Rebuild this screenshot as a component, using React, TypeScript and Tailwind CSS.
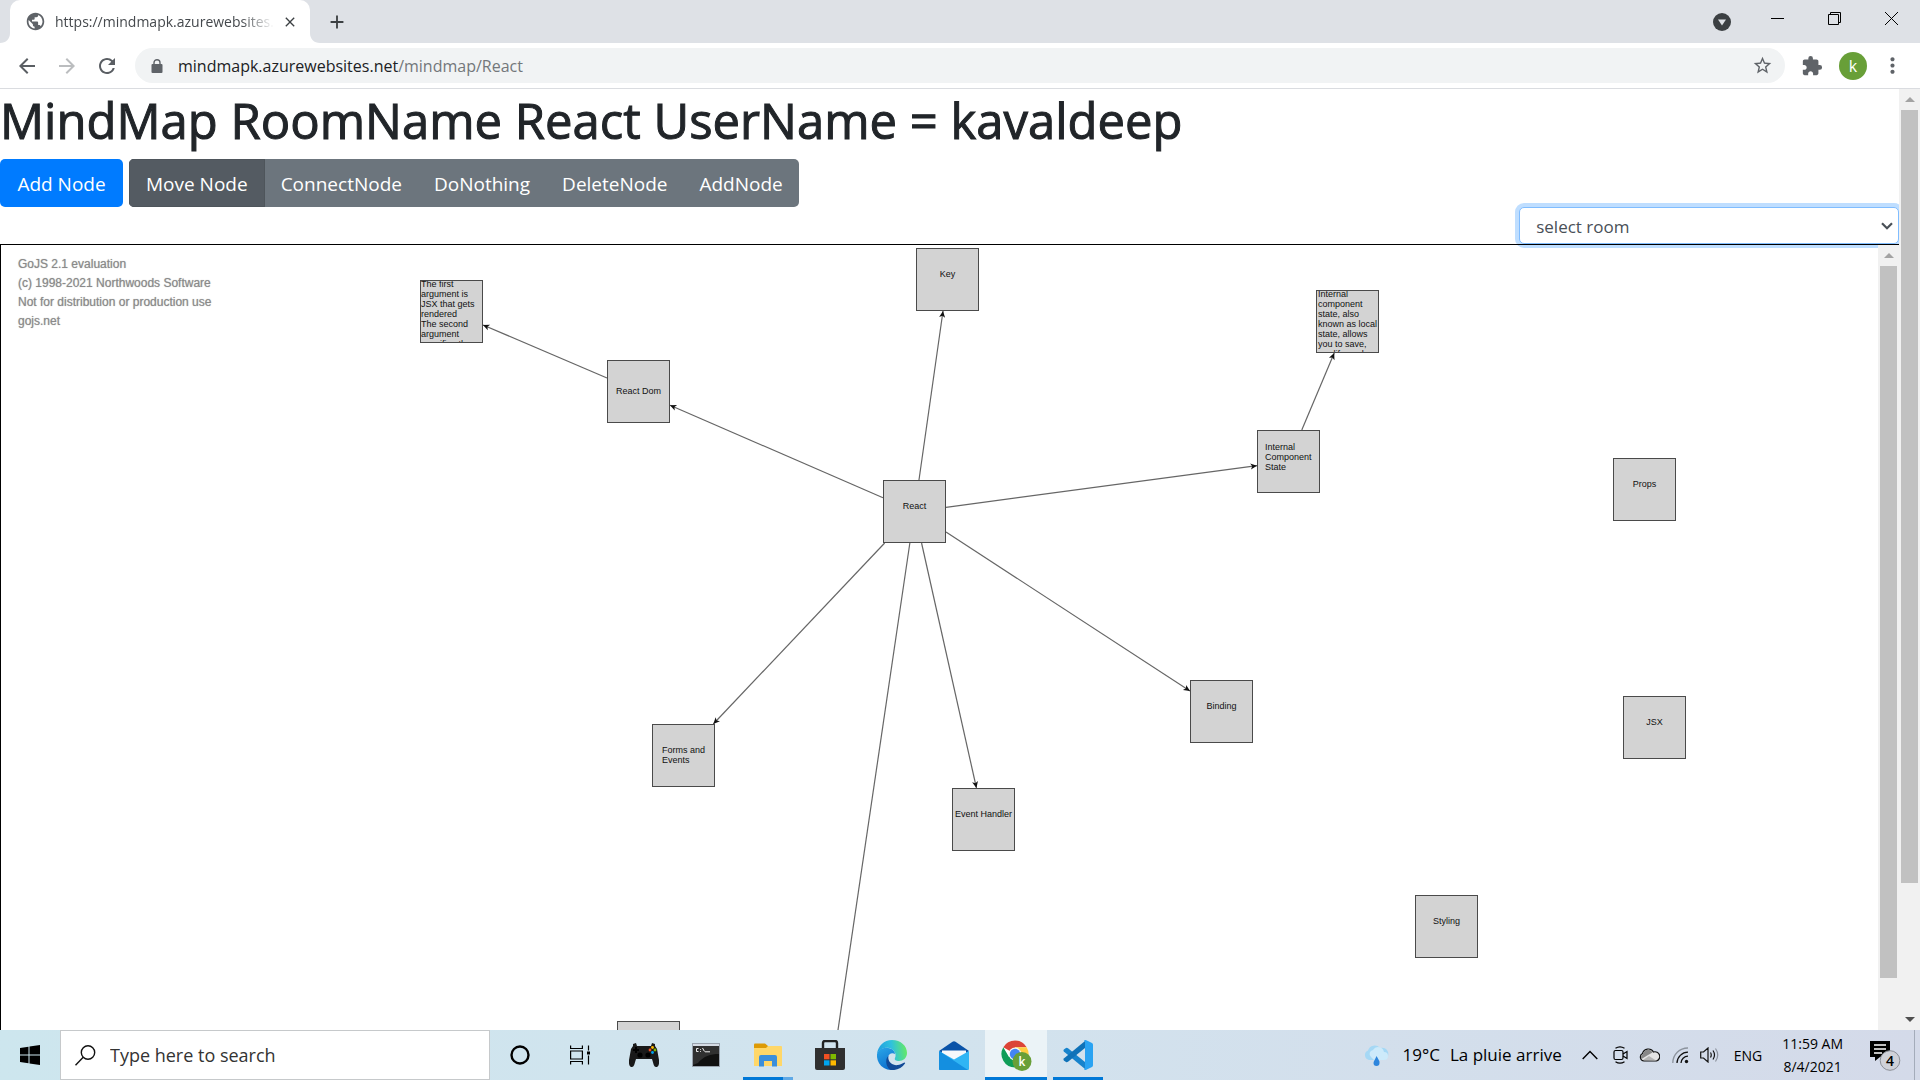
import React from "react";
import {
  MdArrowBack,
  MdArrowForward,
  MdClose,
  MdExtension,
  MdMoreVert,
  MdAdd,
  MdPublic,
  MdRefresh,
  MdStarBorder,
} from "react-icons/md";

const NODE = 63;

type MapNode = {
  id: string;
  x: number;
  y: number;
  lines: string[];
  pad: string;
};

const nodes: MapNode[] = [
  { id: "dom-note", x: 419, y: 35, pad: "-mt-0.5", lines: ["The first", "argument is", "JSX that gets", "rendered", "The second", "argument", "specifies the"] },
  { id: "dom", x: 606, y: 115, pad: "pt-[25px] text-center", lines: ["React Dom"] },
  { id: "key", x: 915, y: 3, pad: "pt-5 text-center", lines: ["Key"] },
  { id: "react", x: 882, y: 235, pad: "pt-5 text-center", lines: ["React"] },
  { id: "state-note", x: 1315, y: 45, pad: "-mt-0.5 pl-px", lines: ["Internal", "component", "state, also", "known as local", "state, allows", "you to save,", "modify, and"] },
  { id: "state", x: 1256, y: 185, pad: "pt-[11px] pl-[7px]", lines: ["Internal", "Component", "State"] },
  { id: "props", x: 1612, y: 213, pad: "pt-5 text-center", lines: ["Props"] },
  { id: "binding", x: 1189, y: 435, pad: "pt-5 text-center", lines: ["Binding"] },
  { id: "jsx", x: 1622, y: 451, pad: "pt-5 text-center", lines: ["JSX"] },
  { id: "forms", x: 651, y: 479, pad: "pt-5 pl-[9px]", lines: ["Forms and", "Events"] },
  { id: "events", x: 951, y: 543, pad: "pt-5 text-center", lines: ["Event Handler"] },
  { id: "styling", x: 1414, y: 650, pad: "pt-5 text-center", lines: ["Styling"] },
  { id: "extra", x: 616, y: 776, pad: "", lines: [] },
  { id: "below", x: 783, y: 906, pad: "", lines: [] },
];

const links: [string, string][] = [
  ["react", "dom"],
  ["dom", "dom-note"],
  ["react", "key"],
  ["react", "state"],
  ["state", "state-note"],
  ["react", "binding"],
  ["react", "events"],
  ["react", "forms"],
  ["react", "below"],
];

/** Line between two node centres, trimmed to the node borders. */
function linkEnds(from: MapNode, to: MapNode) {
  const half = NODE / 2;
  const ax = from.x + half;
  const ay = from.y + half;
  const bx = to.x + half;
  const by = to.y + half;
  const dx = bx - ax;
  const dy = by - ay;
  const t = half / Math.max(Math.abs(dx), Math.abs(dy));
  return { x1: ax + dx * t, y1: ay + dy * t, x2: bx - dx * t, y2: by - dy * t };
}

function Links() {
  const byId = (id: string) => nodes.find((n) => n.id === id)!;
  return (
    <svg className="absolute inset-0 h-full w-full" aria-hidden="true">
      <defs>
        <marker id="arrow" markerUnits="userSpaceOnUse" markerWidth="8" markerHeight="8" refX="7" refY="4" orient="auto">
          <path d="M0.5 1 L7 4 L0.5 7 L2.2 4 Z" fill="#111" />
        </marker>
      </defs>
      {links.map(([a, b]) => (
        <line key={a + b} {...linkEnds(byId(a), byId(b))} stroke="#666" strokeWidth="1.2" markerEnd="url(#arrow)" />
      ))}
    </svg>
  );
}

function Diagram() {
  return (
    <div className="relative min-w-0 flex-1 overflow-hidden font-['Liberation_Sans',sans-serif]">
      <div className="pl-[17px] pt-[10px] text-[12px] leading-[19px] text-[#8a8a8a] text-shadow-[0_0_1px_#aaa]">
        <p>GoJS 2.1 evaluation</p>
        <p>(c) 1998-2021 Northwoods Software</p>
        <p>Not for distribution or production use</p>
        <p>gojs.net</p>
      </div>
      <Links />
      {nodes.map((n) => (
        <div
          key={n.id}
          className="absolute h-[63px] w-[63px] overflow-hidden border border-[#4a4a4a] bg-[#d3d3d3] text-[9px] leading-[10px] whitespace-nowrap text-[#111]"
          style={{ left: n.x, top: n.y }}
        >
          <div className={n.pad}>
            {n.lines.map((l) => (
              <p key={l}>{l}</p>
            ))}
          </div>
        </div>
      ))}
    </div>
  );
}

function TabFoot({ flip }: { flip?: boolean }) {
  return (
    <svg viewBox="0 0 10 10" className={flip ? "h-2.5 w-2.5 self-end -scale-x-100" : "h-2.5 w-2.5 self-end"} aria-hidden="true">
      <path d="M10 0V10H0C6 10 10 6 10 0Z" fill="#fff" />
    </svg>
  );
}

function TabStrip() {
  return (
    <div className="flex h-[43px] bg-[#dee1e6]">
      <TabFoot />
      <div className="flex w-[300px] items-center rounded-t-[10px] bg-white pl-[15px] pr-3">
        <MdPublic className="h-[21px] w-[21px] shrink-0 text-[#5f6368]" />
        <span className="ml-[9px] min-w-0 flex-1 overflow-hidden mask-r-from-85% text-[14px] whitespace-nowrap text-[#45494d]">
          https://mindmapk.azurewebsites.net
        </span>
        <button aria-label="Close tab" className="ml-2 text-[#3c4043]">
          <MdClose className="h-4 w-4" />
        </button>
      </div>
      <TabFoot flip />
      <button aria-label="New tab" className="ml-1.5 text-[#3c4043]">
        <MdAdd className="h-[22px] w-[22px]" />
      </button>
      <div className="ml-auto flex pb-1.5">
        <button aria-label="Search tabs" className="flex w-[54px] items-center justify-center pt-1.5">
          <svg viewBox="0 0 18 18" className="h-[18px] w-[18px]">
            <circle cx="9" cy="9" r="9" fill="#3c4043" />
            <path d="M5 6.5H13L9 12.5Z" fill="#dee1e6" />
          </svg>
        </button>
        <button aria-label="Minimize" className="flex w-[57px] items-center justify-center">
          <svg viewBox="0 0 13 13" className="h-[13px] w-[13px]" stroke="#000">
            <path d="M0 6.5H13" />
          </svg>
        </button>
        <button aria-label="Restore" className="flex w-[57px] items-center justify-center">
          <svg viewBox="0 0 13 13" className="h-[13px] w-[13px]" stroke="#000" fill="none">
            <path d="M0.5 2.5H10.5V12.5H0.5ZM2.5 2.5V0.5H12.5V10.5H10.5" />
          </svg>
        </button>
        <button aria-label="Close window" className="flex w-[57px] items-center justify-center">
          <svg viewBox="0 0 13 13" className="h-[13px] w-[13px]" stroke="#000">
            <path d="M0 0L13 13M13 0L0 13" />
          </svg>
        </button>
      </div>
    </div>
  );
}

function AddressBar() {
  return (
    <div className="flex h-[46px] items-center border-b border-[#dadce0] bg-white pl-[15px]">
      <button aria-label="Back" className="mr-4 text-[#5a5e63]">
        <MdArrowBack className="h-6 w-6" />
      </button>
      <button aria-label="Forward" className="mr-4 text-[#bbbdbf]">
        <MdArrowForward className="h-6 w-6" />
      </button>
      <button aria-label="Reload" className="mr-4 text-[#5a5e63]">
        <MdRefresh className="h-6 w-6" />
      </button>
      <div className="flex h-[35px] flex-1 items-center rounded-full bg-[#f1f3f4] pl-4 pr-3">
        <svg viewBox="0 0 12 14" className="h-3.5 w-3" aria-hidden="true">
          <path d="M3 6V3.700A3 3 0 0 1 9 3.700V6" fill="none" stroke="#5f6368" strokeWidth="1.400" />
          <rect x="0.500" y="5" width="11" height="9" rx="1" fill="#5f6368" />
        </svg>
        <a href="#react" className="ml-[15px] text-[16px] text-[#202124]">
          mindmapk.azurewebsites.net<span className="text-[#73777b]">/mindmap/React</span>
        </a>
        <button aria-label="Bookmark" className="ml-auto text-[#5f6368]">
          <MdStarBorder className="h-[21px] w-[21px]" />
        </button>
      </div>
      <button aria-label="Extensions" className="ml-4 text-[#5f6368]">
        <MdExtension className="h-[22px] w-[22px]" />
      </button>
      <button aria-label="Profile" className="ml-4 flex h-7 w-7 items-center justify-center rounded-full bg-[#689f38] text-[16px] leading-none text-white">
        k
      </button>
      <button aria-label="Menu" className="mr-[15px] ml-[13px] text-[#5f6368]">
        <MdMoreVert className="h-[25px] w-[25px]" />
      </button>
    </div>
  );
}

function ScrollArrow({ down }: { down?: boolean }) {
  return (
    <span className="flex h-[21px] items-center justify-center">
      <svg viewBox="0 0 10 5" className="h-[5px] w-[10px]" aria-hidden="true">
        {down ? <path d="M0 0H10L5 5Z" fill="#505050" /> : <path d="M5 0L10 5H0Z" fill="#a3a3a3" />}
      </svg>
    </span>
  );
}

const modes = ["Move Node", "ConnectNode", "DoNothing", "DeleteNode", "AddNode"];

function Page() {
  return (
    <main className="flex min-w-0 flex-1 flex-col overflow-hidden">
      <h1 className="mb-2 text-[49px] leading-[62px] font-medium whitespace-nowrap text-[#212529] [-webkit-text-stroke:1px_#212529]">
        MindMap RoomName React UserName = kavaldeep
      </h1>
      <div className="flex gap-1.5 text-[19px] leading-[30px] text-white">
        <button className="h-12 w-[123px] rounded-[5px] bg-[#007bff] pt-0.5">Add Node</button>
        <div role="group" className="flex h-12 overflow-hidden rounded-[5px] bg-[#6c757d]">
          {modes.map((m, i) => (
            <button
              key={m}
              className={i === 0 ? "border border-[#4e555b] bg-[#545b62] px-4 pt-0.5" : "px-4 pt-0.5"}
            >
              {m}
            </button>
          ))}
        </div>
      </div>
      <div className="ml-auto grid w-1/5">
        <select
          aria-label="Room"
          className="col-start-1 row-start-1 h-[37px] appearance-none rounded-[5px] border border-[#80bdff] bg-white px-4 pt-0.5 text-[17px] text-[#495057] ring-4 ring-[#bfdeff] outline-none"
        >
          <option>select room</option>
        </select>
        <svg viewBox="0 0 12 8" className="pointer-events-none col-start-1 row-start-1 mr-1.5 h-2 w-3 self-center justify-self-end" fill="none" stroke="#495057" strokeWidth="2.2">
          <path d="M1 1.2L6 6.2L11 1.2" />
        </svg>
      </div>
      <div className="relative flex min-h-0 flex-1 border-t border-l border-black">
        <Diagram />
        <div className="flex w-[21px] flex-col bg-[#f1f1f1]">
          <ScrollArrow />
          <div className="mx-0.5 h-[712px] bg-[#c1c1c1]" />
        </div>
      </div>
    </main>
  );
}

const GamepadIcon = () => (
  <svg viewBox="0 0 30 24" className="h-6 w-[30px]">
    <path d="M4 3V1L7 0 8 3H22L23 0 26 1V3L28 6 30 17C30.500 22 29 24 27 24 25 24 24.500 21 23 16H7C5.500 21 5 24 3 24 1 24 -.5 22 0 17L2 6Z" fill="#191919" />
    <circle cx="11" cy="12" r="2.6" fill="#000" />
    <circle cx="19" cy="12" r="2.6" fill="#000" />
    <path d="M7 4V10M4 7H10" stroke="#000" strokeWidth="2" />
    <circle cx="23.5" cy="4.500" r="1.4" fill="#ffb900" />
    <circle cx="21" cy="7" r="1.4" fill="#f25022" />
    <circle cx="26" cy="7" r="1.4" fill="#7fba00" />
    <circle cx="23.5" cy="9.500" r="1.4" fill="#00a4ef" />
  </svg>
);

const TerminalIcon = () => (
  <svg viewBox="0 0 28 24" className="h-6 w-7">
    <rect x="0.5" y="0.5" width="27" height="23" fill="#111" stroke="#99a2ad" />
    <rect x="1" y="1" width="26" height="2" fill="#d5dbe4" />
    <path d="M1 3H27V11C18 11 12 13 6 20L1 22Z" fill="#303030" />
    <path d="M6.5 5.500H4.500V8.500H6.500M8.500 6V6.800M8.500 8V8.800M10.500 5L12.500 8.500M13 8.800H18" stroke="#eee" fill="none" />
  </svg>
);

const FolderIcon = () => (
  <svg viewBox="0 0 28 24" className="h-6 w-7">
    <path d="M0 1.500Q0 .5 1 .5H11L14 3V7H0Z" fill="#dd9a05" />
    <path d="M0 5H12L14 3H27Q28 3 28 4V23H0Z" fill="#ffd768" />
    <path d="M5 23.500V14Q5 12 7 12H21Q23 12 23 14V23.500H18V18H10V23.500Z" fill="#3b8fdb" />
  </svg>
);

const StoreIcon = () => (
  <svg viewBox="0 0 30 30" className="h-[30px] w-[30px]">
    <path d="M8 9V3Q8 1 10 1H20Q22 1 22 3V9" fill="none" stroke="#222" strokeWidth="2.400" />
    <path d="M0 8H30V28Q30 30 28 30H2Q0 30 0 28Z" fill="#303030" />
    <path d="M9 14H14.500V19.300H9Z" fill="#f25022" />
    <path d="M15.500 14H21V19.300H15.500Z" fill="#7fba00" />
    <path d="M9 20.300H14.500V25.500H9Z" fill="#00a4ef" />
    <path d="M15.500 20.300H21V25.500H15.500Z" fill="#ffb900" />
  </svg>
);

const EdgeIcon = () => (
  <svg viewBox="0 0 30 30" className="h-[30px] w-[30px]">
    <defs>
      <linearGradient id="edge-top" x1="0" y1="0.5" x2="1" y2="0.400">
        <stop offset="0" stopColor="#1f9de0" />
        <stop offset="0.500" stopColor="#2fc1de" />
        <stop offset="1" stopColor="#66eb62" />
      </linearGradient>
      <linearGradient id="edge-left" x1="0" y1="0" x2="0.500" y2="1">
        <stop offset="0" stopColor="#2aa7e8" />
        <stop offset="1" stopColor="#0c6fce" />
      </linearGradient>
    </defs>
    <path d="M0 14C1 6 7 0 15 0C24 0 30 6 30 13C30 18 26 21 22 21C19 21 17 20 18 18C20 14 17 9 12 8C7 7 2 10 0 14Z" fill="url(#edge-top)" />
    <path d="M0 14C2 9 7 7 11 8C15 8.500 18 11 18 14C15 12 11 14 11 18C11 23 16 27 21 28C17 30.500 11 30.500 7 28C2 25 -0.500 20 0 14Z" fill="url(#edge-left)" />
    <path d="M11.500 16C10 22 16 26 21 25C24 24.500 26 23 27.500 22.500C28 22.500 28.300 23 28 23.500C25 28 20 30.500 14 30C9 28 7.500 19 11.500 16Z" fill="#114a97" />
  </svg>
);

const MailIcon = () => (
  <svg viewBox="0 0 30 29" className="h-[29px] w-[30px]">
    <path d="M0 10L13.500 .7Q15 -.2 16.500 .7L30 10L15 20Z" fill="#0a53a8" />
    <path d="M3 9.500H27V15L15 22L3 15Z" fill="#f7f8fb" />
    <path d="M0 10L15 18.500L30 10V28Q30 29 29 29H1Q0 29 0 28Z" fill="#30b5f4" />
    <path d="M0 10L29 29H1Q0 29 0 28Z" fill="#148fe0" />
  </svg>
);

const ChromeIcon = () => (
  <svg viewBox="0 0 31 31" className="h-[31px] w-[31px]">
    <circle cx="14" cy="14" r="13.500" fill="#fff" />
    <path d="M14 14L2.300 7.250A13.500 13.500 0 0 1 25.700 7.250H14Z" fill="#db4437" />
    <path d="M14 14V7.250H25.700A13.500 13.500 0 0 1 14 27.500L20 17.500Z" fill="#ffcd40" />
    <path d="M14 14L20 17.500L14 27.500A13.500 13.500 0 0 1 2.300 7.250L8 17Z" fill="#0f9d58" />
    <circle cx="14" cy="14" r="6.500" fill="#f5f5f5" />
    <circle cx="14" cy="14" r="5.200" fill="#4285f4" />
    <circle cx="21" cy="21.500" r="9.500" fill="#689f38" />
    <text x="21" y="26" textAnchor="middle" fontSize="12" fontWeight="600" fill="#fff">k</text>
  </svg>
);

const CodeIcon = () => (
  <svg viewBox="0 0 30 30" className="h-[30px] w-[30px]">
    <path d="M0.800 9.500L3 8Q4 7.500 5 8.300L22 22V29L0.800 11.500Q0 10.500 0.800 9.500Z" fill="#1783cc" />
    <path d="M0.800 20.500L3 22Q4 22.500 5 21.700L22 8V1L0.800 18.500Q0 19.500 0.800 20.500Z" fill="#0f72b8" />
    <path d="M21 .5Q22 -.3 23.300 .3L29 3Q30 3.500 30 4.700V25.300Q30 26.500 29 27L23.300 29.700Q22 30.300 21 29.500L22 28V2Z" fill="#2aa3f2" />
  </svg>
);

const apps = [
  { name: "Game controller", Icon: GamepadIcon, box: "", bar: "" },
  { name: "Command Prompt", Icon: TerminalIcon, box: "", bar: "" },
  { name: "File Explorer", Icon: FolderIcon, box: "", bar: "mx-1.5 border-r-[10px] border-[#5fa9e6] bg-[#0078d7]" },
  { name: "Microsoft Store", Icon: StoreIcon, box: "", bar: "" },
  { name: "Microsoft Edge", Icon: EdgeIcon, box: "", bar: "" },
  { name: "Mail", Icon: MailIcon, box: "", bar: "" },
  { name: "Google Chrome", Icon: ChromeIcon, box: "bg-[#ebf3f7]", bar: "bg-[#0078d7]" },
  { name: "Visual Studio Code", Icon: CodeIcon, box: "", bar: "mx-1.5 bg-[#0078d7]" },
];

function Taskbar() {
  return (
    <footer className="flex h-[50px] shrink-0 items-stretch bg-linear-to-r from-[#cde6ee] via-[#d2e3ee] to-[#d4dae9] text-black">
      <button aria-label="Start" className="flex w-[60px] items-center justify-center">
        <svg viewBox="0 0 20 20" className="h-5 w-5">
          <path d="M0 3L8.500 1.800V9.500H0ZM9.500 1.600L20 0V9.500H9.500ZM0 10.500H8.500V18.200L0 17ZM9.500 10.500H20V20L9.500 18.400Z" />
        </svg>
      </button>
      <label className="flex w-[430px] items-center border border-[#c6c9cb] bg-white pl-3.5">
        <svg viewBox="0 0 21 21" className="h-[21px] w-[21px]" fill="none" stroke="#111" strokeWidth="1.400">
          <circle cx="13" cy="7.500" r="6.700" />
          <path d="M8.200 12.200L.5 20.300" />
        </svg>
        <input
          aria-label="Search"
          placeholder="Type here to search"
          className="ml-3.5 min-w-0 flex-1 bg-transparent text-[18px] outline-none placeholder:text-[#333]"
        />
      </label>
      <button aria-label="Cortana" className="flex w-[60px] items-center justify-center">
        <svg viewBox="0 0 20 20" className="h-5 w-5" fill="none" stroke="#000" strokeWidth="2.400">
          <circle cx="10" cy="10" r="8.500" />
        </svg>
      </button>
      <button aria-label="Task View" className="mr-[3px] flex w-[60px] items-center justify-center">
        <svg viewBox="0 0 20 20" className="h-5 w-5" fill="none" stroke="#000" strokeWidth="1.200">
          <path d="M.6 .5V3.500H12.400V.5M.6 19.500V16.500H12.400V19.500M.6 6H12.400V14H.6ZM18.500 .5V5.500M18.500 10.500V19.500" />
          <path d="M17 6.500H20V9.500H17Z" fill="#000" stroke="none" />
        </svg>
      </button>
      {apps.map(({ name, Icon, box, bar }) => (
        <button key={name} aria-label={name} className={"flex w-[62px] flex-col " + box}>
          <span className="flex flex-1 items-center justify-center pt-[3px]">
            <Icon />
          </span>
          <span className={"h-[3px] self-stretch " + bar} />
        </button>
      ))}
      <div className="ml-auto flex items-center">
        <button className="flex items-center text-[17px] whitespace-nowrap">
          <svg viewBox="0 0 26 22" className="mr-3.5 h-[22px] w-[26px]">
            <path d="M6 16A5 5 0 0 1 5 6.500A7 7 0 0 1 17 4A6 6 0 0 1 21 16Z" fill="#a5d8f5" />
            <path d="M8 13A4 4 0 0 1 10 6A6 6 0 0 1 21 8A4 4 0 0 1 21 16H11Z" fill="#cdeafa" />
            <path d="M13.500 12C15 15 17 17 16.500 19A3 3 0 0 1 10.500 19C10.500 17 12.500 15 13.500 12Z" fill="#2f86dd" />
          </svg>
          <span>19°C</span>
          <span className="ml-2.5">La pluie arrive</span>
        </button>
        <button aria-label="Show hidden icons" className="ml-5">
          <svg viewBox="0 0 16 10" className="h-2.5 w-4" fill="none" stroke="#000" strokeWidth="1.400">
            <path d="M.7 9L8 1.500L15.300 9" />
          </svg>
        </button>
        <button aria-label="Meet Now" className="ml-[15px]">
          <svg viewBox="0 0 15 18" className="h-[18px] w-[15px]" fill="none" stroke="#000" strokeWidth="1.200">
            <rect x="1" y="4.500" width="9" height="9" rx="1.500" />
            <path d="M10 8L14 5.500V12.500L10 10M2.500 2.300Q7 -.5 11.500 2.300M2.500 15.700Q7 18.500 11.500 15.700" />
          </svg>
        </button>
        <button aria-label="OneDrive" className="ml-[11px]">
          <svg viewBox="0 0 21 14" className="h-3.5 w-[21px]" stroke="#111" strokeWidth="1.200">
            <path d="M5 13A4 4 0 0 1 3.500 5.500A6 6 0 0 1 14.500 4A4.500 4.500 0 0 1 17.500 13Z" fill="#e4e4e4" />
            <path d="M2.500 11A3.500 3.500 0 0 1 4 6A5 5 0 0 1 13.500 4.500L9 7Z" fill="#888" stroke="none" />
            <path d="M4 12L10 8L17 12.400Z" fill="#b5b5b5" stroke="none" />
          </svg>
        </button>
        <button aria-label="Wi-Fi" className="ml-3">
          <svg viewBox="0 0 17 17" className="h-[17px] w-[17px]" fill="none" stroke="#111" strokeWidth="1.300">
            <path d="M.8 16A15 15 0 0 1 16 1" stroke="#8c939d" />
            <path d="M5 16A11 11 0 0 1 16 5.200M9 16A7 7 0 0 1 16 9.200" />
            <circle cx="14.500" cy="14.500" r="1.700" fill="#111" stroke="none" />
          </svg>
        </button>
        <button aria-label="Volume" className="ml-[11px]">
          <svg viewBox="0 0 20 16" className="h-4 w-5" fill="none" stroke="#111" strokeWidth="1.200">
            <path d="M.7 5H3.500L8 1V15L3.500 11H.7ZM10.500 5.500Q12 8 10.500 10.500M13 3.500Q16 8 13 12.500" />
            <path d="M15.500 1.500Q20 8 15.500 14.500" stroke="#8c939d" />
          </svg>
        </button>
        <span className="ml-3.5 text-[14px]">ENG</span>
        <time className="ml-5 text-center text-[14px] leading-[23px] whitespace-nowrap">
          11:59 AM
          <br />
          8/4/2021
        </time>
        <button aria-label="4 notifications" className="mr-[13px] ml-[27px] flex h-[50px] w-[31px] items-center">
          <svg viewBox="0 0 31 32" className="h-8 w-[31px]">
            <path d="M0 2H20V18H10L5 22V18H0Z" />
            <path d="M4 6H16M4 10H16M4 14H12" stroke="#fff" strokeWidth="1.300" />
            <circle cx="20" cy="21.500" r="9.800" fill="#cfd1d8" stroke="#8b8f96" />
            <text x="20" y="26.500" textAnchor="middle" fontSize="14" fontWeight="600">4</text>
          </svg>
        </button>
        <span className="h-full w-1.5 border-l border-[#a4acba]" />
      </div>
    </footer>
  );
}

export default function App() {
  return (
    <div className="flex h-screen flex-col overflow-hidden bg-white font-['Open_Sans',sans-serif]">
      <header className="shrink-0">
        <TabStrip />
        <AddressBar />
      </header>
      <div className="flex min-h-0 flex-1">
        <Page />
        <div className="flex w-[21px] flex-col bg-[#f1f1f1]">
          <ScrollArrow />
          <div className="mx-0.5 h-[773px] bg-[#c1c1c1]" />
          <div className="mt-auto">
            <ScrollArrow down />
          </div>
        </div>
      </div>
      <Taskbar />
    </div>
  );
}
